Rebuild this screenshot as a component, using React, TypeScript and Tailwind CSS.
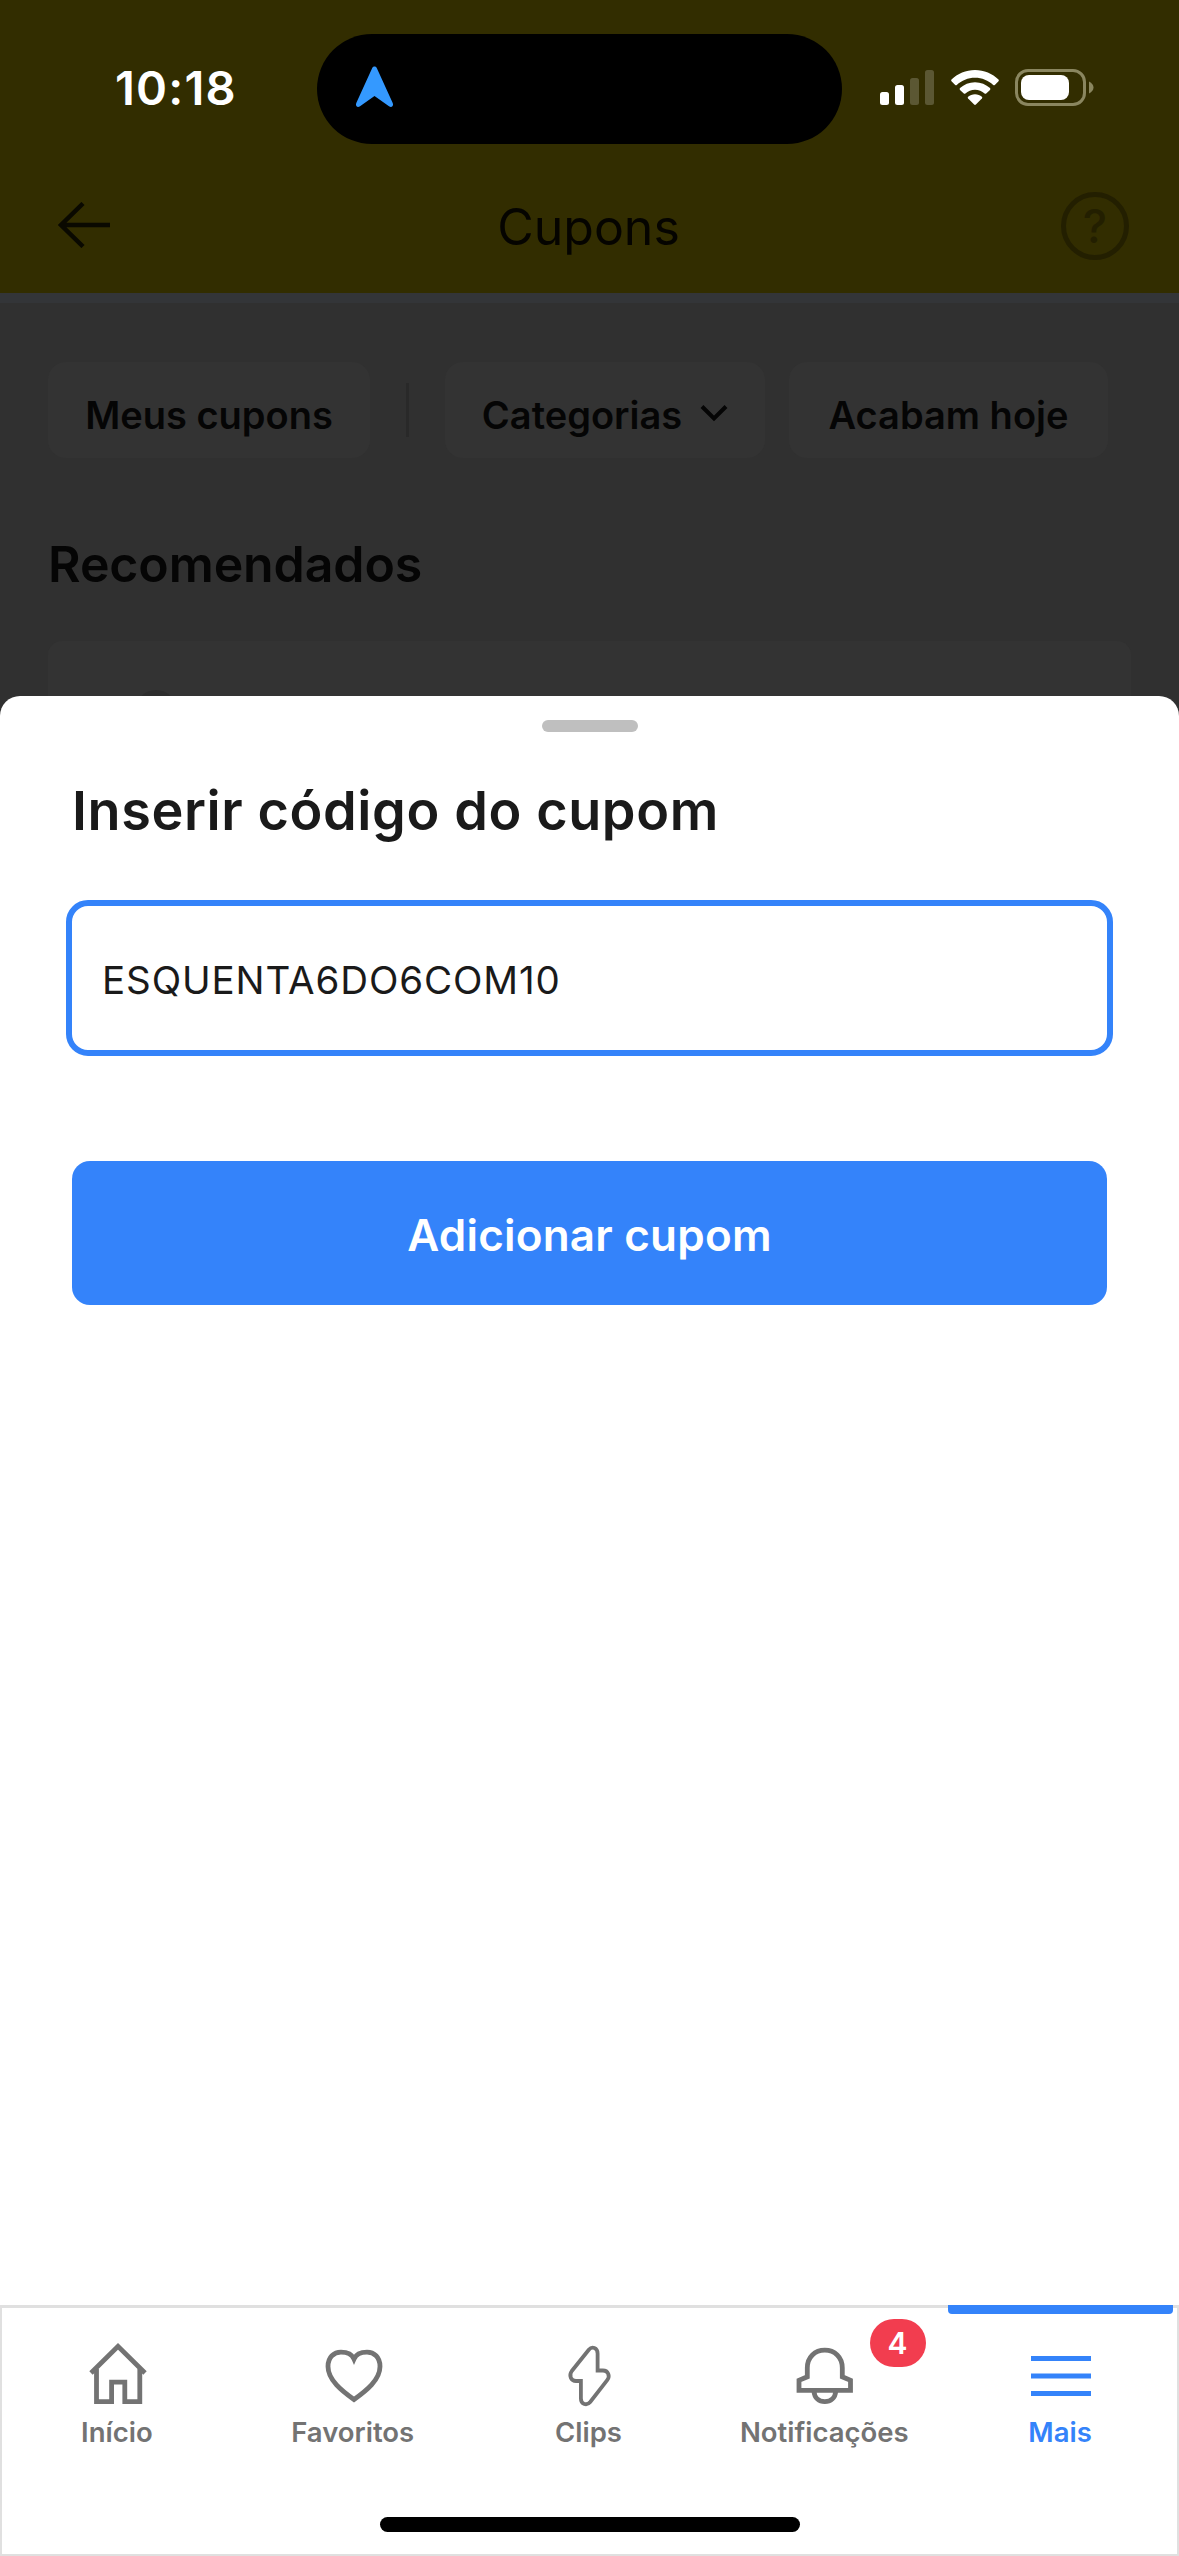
import type { ReactNode } from "react";
import clsx from "clsx";

function StatusBar() {
  return (
    <div className="flex h-[144px] items-start">
      <time className="mt-[60px] ml-[115px] w-[202px] text-[47px] leading-[56px] font-semibold tracking-[1.2px] text-white">
        10:18
      </time>
      <div className="mt-[34px] flex h-[110px] w-[525px] items-center rounded-full bg-black pl-[38px]">
        <svg width="39" height="42" viewBox="0 0 39 42" className="-mt-[4px]">
          <path
            d="M17 2.4 C18 -.2 21 -.2 22 2.4 L37.6 36.8 C39 40 36.6 42 34 40.2 L19.5 30 L5 40.2 C2.4 42 0 40 1.4 36.8 Z"
            fill="#3499ff"
          />
        </svg>
      </div>
      <div className="mt-[67px] ml-[38px] flex items-start">
        <svg width="55" height="40" viewBox="0 0 55 40" fill="#fff">
          <rect x="0" y="25" width="9" height="13" rx="2.5" />
          <rect x="15" y="18" width="9" height="20" rx="2.5" />
          <rect x="30" y="11" width="9" height="27" rx="2.5" opacity=".2" />
          <rect x="45" y="3" width="9" height="35" rx="2.5" opacity=".2" />
        </svg>
        <svg width="48" height="40" viewBox="0 0 48 40" fill="#fff" className="ml-[16px]">
          <path d="M24 3 C33 3 41.5 6.6 47.5 12.5 Q48.2 13.3 47.5 14.2 L43.8 17.9 Q43 18.6 42.2 17.9 C37.3 13.4 31 10.7 24 10.7 C17 10.7 10.7 13.4 5.8 17.9 Q5 18.6 4.2 17.9 L.5 14.2 Q-.2 13.3 .5 12.5 C6.5 6.6 15 3 24 3 Z" />
          <path d="M24 15.3 C29.8 15.3 35 17.5 39 21.1 Q39.8 22 39 22.9 L35.2 26.5 Q34.4 27.2 33.6 26.5 C31 24.2 27.7 22.8 24 22.8 C20.3 22.8 17 24.2 14.4 26.5 Q13.6 27.2 12.8 26.5 L9 22.9 Q8.2 22 9 21.1 C13 17.5 18.2 15.3 24 15.3 Z" />
          <path d="M24 27.2 C26.7 27.2 29.1 28.2 30.9 29.8 Q31.7 30.6 30.9 31.5 L24.9 37.6 Q24 38.5 23.1 37.6 L17.1 31.5 Q16.3 30.6 17.1 29.8 C18.9 28.2 21.3 27.2 24 27.2 Z" />
        </svg>
        <svg width="80" height="42" viewBox="0 0 80 42" className="ml-[16px]">
          <rect x="1.5" y="3.5" width="68" height="34" rx="11.5" fill="none" stroke="#8a865f" strokeWidth="3" />
          <rect x="6" y="8" width="48" height="25" rx="8" fill="#fff" />
          <path d="M74 14.5 Q78.5 16.8 78.5 20.5 Q78.5 24.2 74 26.5 Z" fill="#8a865f" />
        </svg>
      </div>
    </div>
  );
}

function Header() {
  return (
    <header className="h-[293px] shrink-0 bg-[#322d00]">
      <StatusBar />
      <div className="mt-[44px] flex h-[76px] items-center justify-between pr-[50px] pl-[57px]">
        <svg width="54" height="46" viewBox="0 0 54 46" fill="none" stroke="#0a0900" strokeWidth="4.5" className="-mt-[2px]">
          <path d="M26 1.5 L4 23 L26 44.5 M4 23 H53" />
        </svg>
        <h1 className="ml-[5px] pt-[2px] text-[50px] leading-[72px] text-[#050400]">
          Cupons
        </h1>
        <span className="grid h-[68px] w-[68px] place-items-center rounded-full border-[5px] border-[#231f00] text-[46px] leading-[58px] font-medium text-[#231f00]">
          ?
        </span>
      </div>
    </header>
  );
}

function Chip({ className, children }: { className: string; children: ReactNode }) {
  return (
    <button
      className={clsx(
        "flex h-[96px] items-center justify-center rounded-[18px] bg-[#333] pt-[10px] text-[38px] font-semibold text-[#050505]",
        className,
      )}
    >
      {children}
    </button>
  );
}

const tabs = [
  {
    label: "Início",
    icon: (
      <>
        <path d="M5 35 L32 8.3 L59 35" />
        <path d="M10.5 31 V63.7 H25.6 V44.2 H38.8 V63.7 H53.8 V31" />
      </>
    ),
  },
  {
    label: "Favoritos",
    icon: (
      <path d="M32 61.5 C20 53 6 42 6 28.5 C6 19 12 14.2 19 14.2 C25 14.2 30 16.5 32 21 C34 16.5 39 14.2 45 14.2 C52 14.2 58 19 58 28.5 C58 42 44 53 32 61.5 Z" />
    ),
  },
  {
    label: "Clips",
    icon: (
      <path
        strokeWidth="3.8"
        d="M40.6 32.5 V15.5 C40.6 9.5 35 8 31.8 11.8 L14.8 33 C11.5 37.5 14 43 19 43 H23.9 V60.5 C23.9 66.5 29.8 68 33.2 64 L50.2 42.2 C53.5 38 51 32.5 46 32.5 Z"
      />
    ),
  },
  {
    label: "Notificações",
    icon: (
      <>
        <path d="M6 52.4 V42.3 L14.3 38.8 V30 C14.3 19 22 12.2 31.8 12.2 C41.6 12.2 49.3 19 49.3 30 V38.8 L57.5 42.3 V52.4 Z" />
        <path d="M21 53.5 C21.5 60 26 63.7 31.8 63.7 C37.6 63.7 42.2 60 42.7 53.5" />
      </>
    ),
    badge: 4,
  },
  {
    label: "Mais",
    icon: <path d="M2 20.5 H62 M2 38 H62 M2 55.5 H62" />,
    active: true,
  },
];

function TabBar() {
  return (
    <nav className="h-[251px] shrink-0 border-x-2 border-t-[3px] border-b-2 border-[#e0e0e0] bg-white">
      <ul className="-mx-[2px] flex">
        {tabs.map((tab) => (
          <li
            key={tab.label}
            className={clsx(
              "relative flex flex-1 flex-col items-center pt-[30px]",
              tab.active ? "text-[#3483fa]" : "text-[#737373]",
            )}
          >
            {tab.active && (
              <span className="absolute -top-[3px] right-[6px] left-[5px] h-[9px] rounded-b-[4px] bg-[#3483fa]" />
            )}
            <svg width="64" height="72" viewBox="0 0 64 72" fill="none" stroke="currentColor" strokeWidth="4.8">
              {tab.icon}
            </svg>
            <span className="mt-[4px] pr-[2px] text-[27.5px] leading-[36px] font-semibold">
              {tab.label}
            </span>
            {tab.badge && (
              <span className="absolute top-[11px] left-[163px] flex h-[48px] w-[56px] items-center justify-center rounded-full bg-[#f23d4f] pr-[2px] text-[30px] leading-none font-semibold text-white">
                {tab.badge}
              </span>
            )}
          </li>
        ))}
      </ul>
      <div className="mx-auto mt-[67px] h-[15px] w-[420px] rounded-full bg-black" />
    </nav>
  );
}

export default function App() {
  return (
    <div className="flex h-[2556px] w-[1179px] flex-col overflow-hidden bg-[#303030] font-['Inter',sans-serif]">
      <Header />
      <div className="h-[10px] shrink-0 bg-[#333538]" />

      <section className="h-[415px] shrink-0 px-[48px] pt-[59px]">
        <div className="flex items-center">
          <Chip className="w-[322px]">Meus cupons</Chip>
          <span className="mx-[36px] h-[54px] w-[3px] bg-[#292929]" />
          <Chip className="w-[320px] gap-[18px]">
            Categorias
            <svg width="28" height="18" viewBox="0 0 28 18" fill="none" stroke="currentColor" strokeWidth="4" className="-mt-[4px]">
              <path d="M2 2.5 L14 14.5 L26 2.5" />
            </svg>
          </Chip>
          <Chip className="ml-[24px] w-[319px]">Acabam hoje</Chip>
        </div>
        <h2 className="mt-[71px] text-[50px] leading-[70px] font-semibold tracking-[-0.1px] text-[#050505]">
          Recomendados
        </h2>
        <div className="mt-[42px] h-[90px] rounded-t-[14px] bg-[#333] pt-[49px] pl-[87px]">
          <div className="h-[42px] w-[42px] rounded-full bg-[#2d2d2d]" />
        </div>
      </section>

      <main className="relative -mt-[22px] flex grow flex-col rounded-t-[20px] bg-white px-[72px]">
        <span className="mx-auto mt-[24px] h-[12px] w-[96px] rounded-full bg-[#bfbfbf]" />
        <h2 className="mt-[43px] text-[54px] leading-[72px] font-semibold tracking-[0.6px] text-[#1a1a1a]">
          Inserir código do cupom
        </h2>
        <div className="-mx-[6px] mt-[53px] flex h-[156px] items-center rounded-[22px] border-[6px] border-[#3483fa] px-[30px] pt-[5px] text-[38.5px] tracking-[0.9px] text-[#1a1a1a]">
          ESQUENTA6DO6COM10
        </div>
        <button className="mt-[105px] h-[144px] rounded-[18px] bg-[#3483fa] pt-[3px] text-[44px] font-semibold tracking-[0.2px] text-white">
          Adicionar cupom
        </button>
      </main>

      <TabBar />
    </div>
  );
}
